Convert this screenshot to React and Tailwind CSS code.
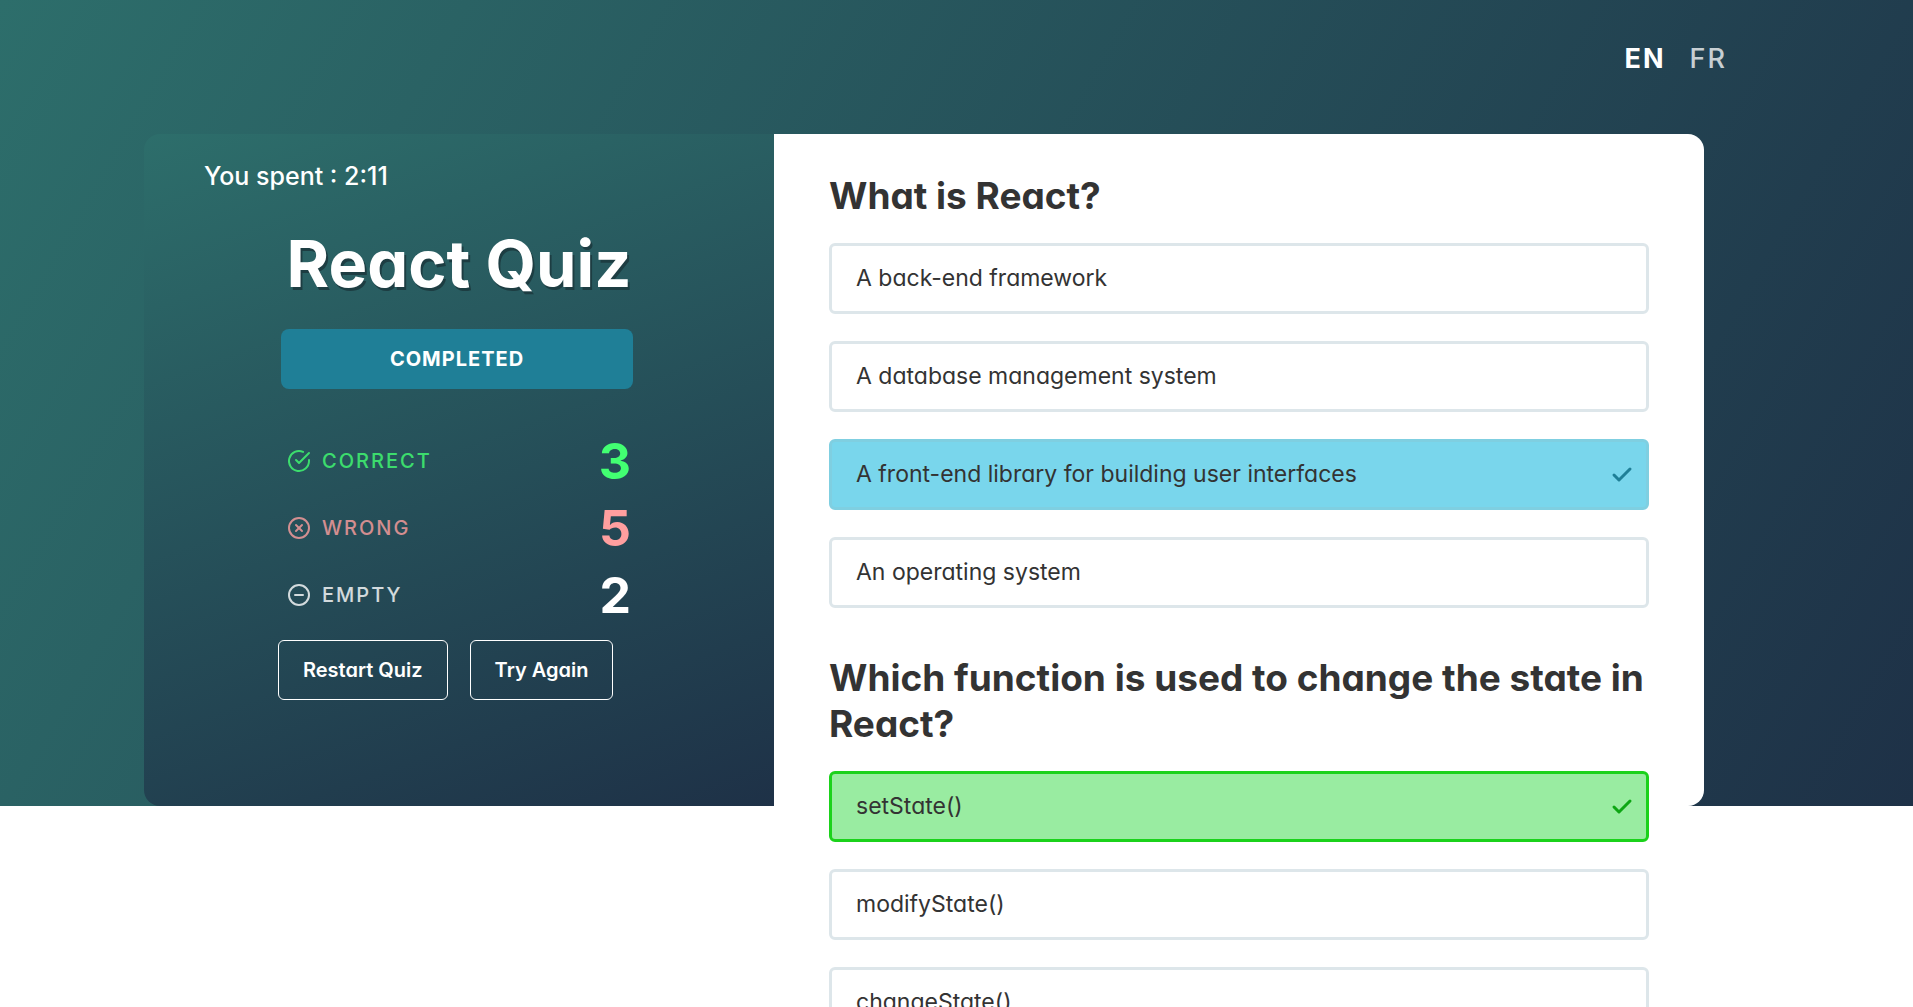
import React from 'react';
import { Check } from 'lucide-react';
import { FiCheckCircle, FiXCircle, FiMinusCircle } from 'react-icons/fi';

const questions = [
  {
    title: 'What is React?',
    options: [
      { text: 'A back-end framework' },
      { text: 'A database management system' },
      { text: 'A front-end library for building user interfaces', state: 'answer' },
      { text: 'An operating system' },
    ],
  },
  {
    title: 'Which function is used to change the state in React?',
    options: [
      { text: 'setState()', state: 'correct' },
      { text: 'modifyState()' },
      { text: 'changeState()' },
    ],
  },
];

const stats = [
  { label: 'Correct', value: 3, Icon: FiCheckCircle, color: 'text-[#42ff72]' },
  { label: 'Wrong', value: 5, Icon: FiXCircle, color: 'text-[#ff9f9f]' },
  { label: 'Empty', value: 2, Icon: FiMinusCircle, color: 'text-white' },
];

const optionStyles = {
  plain: 'border-[#dde6ea] bg-white',
  answer: 'border-[#7fcfe1] bg-[#79d6ec]',
  correct: 'border-[#1bd21b] bg-[#99eca1]',
};

const checkStyles = {
  answer: 'text-[#1f7f97]',
  correct: 'text-[#0ea614]',
};

function Option({ text, state = 'plain' }) {
  return (
    <button
      type="button"
      className={`flex h-[71px] w-full items-center justify-between rounded-md border-[3px] pl-6 pr-3 text-left text-[23px] text-[#333] ${optionStyles[state]}`}
    >
      <span>{text}</span>
      {state !== 'plain' && <Check size={24} strokeWidth={3} className={checkStyles[state]} />}
    </button>
  );
}

function Question({ title, options }) {
  return (
    <section>
      <h2 className="mb-6 text-[37px] font-bold leading-[46px] text-[#333]">{title}</h2>
      <div className="flex flex-col gap-[27px]">
        {options.map((o) => (
          <Option key={o.text} {...o} />
        ))}
      </div>
    </section>
  );
}

function Stat({ label, value, Icon, color }) {
  return (
    <div className={`flex h-[67px] items-center justify-between ${color}`}>
      <dt className="flex items-center gap-[11px] text-[20px] font-medium uppercase tracking-[2px] opacity-80">
        <Icon size={24} />
        {label}
      </dt>
      <dd className="text-[50px] font-bold leading-none">{value}</dd>
    </div>
  );
}

function Summary() {
  return (
    <aside className="rounded-l-2xl bg-[linear-gradient(160deg,#2d6e6b,#1e3147)] pt-[22px] text-white">
      <p className="ml-[60px] text-[25px] font-medium leading-10">You spent : 2:11</p>
      <h1 className="mt-7 text-center text-[65px] font-bold leading-[80px] [text-shadow:2px_3px_0_#1d3d42]">
        React Quiz
      </h1>
      <div className="ml-[137px] mt-[25px] w-[352px]">
        <button
          type="button"
          className="h-[60px] w-full rounded-lg bg-[#1f7f97] text-[20px] font-bold uppercase tracking-[1px]"
        >
          Completed
        </button>
        <dl className="mt-[38px] pl-1.5 pr-0.5">
          {stats.map((s) => (
            <Stat key={s.label} {...s} />
          ))}
        </dl>
      </div>
      <div className="ml-[134px] mt-3 flex gap-[22px]">
        {['Restart Quiz', 'Try Again'].map((t) => (
          <button
            key={t}
            type="button"
            className="h-[60px] whitespace-nowrap rounded-md border border-white px-6 text-[20px] font-semibold"
          >
            {t}
          </button>
        ))}
      </div>
    </aside>
  );
}

export default function App() {
  return (
    <div className="min-h-screen bg-white font-['Inter',sans-serif] [font-feature-settings:'cv11']">
      <div className="flex h-[80vh] flex-col bg-[linear-gradient(120deg,#2d6e6b,#1e3147)]">
        <header className="flex h-[134px] shrink-0 items-start justify-end gap-6 pr-[186px] pt-[39px] text-[27px] leading-10 tracking-[2px] text-white">
          <button type="button" className="font-bold">EN</button>
          <button type="button" className="font-medium opacity-75">FR</button>
        </header>
        <main className="ml-36 mr-[209px] grid min-h-0 flex-1 grid-cols-[630fr_930fr] grid-rows-[minmax(0,1fr)]">
          <Summary />
          <div className="flex flex-col gap-[47px] rounded-r-2xl bg-white px-[55px] pt-[39px]">
            {questions.map((q) => (
              <Question key={q.title} {...q} />
            ))}
          </div>
        </main>
      </div>
    </div>
  );
}
